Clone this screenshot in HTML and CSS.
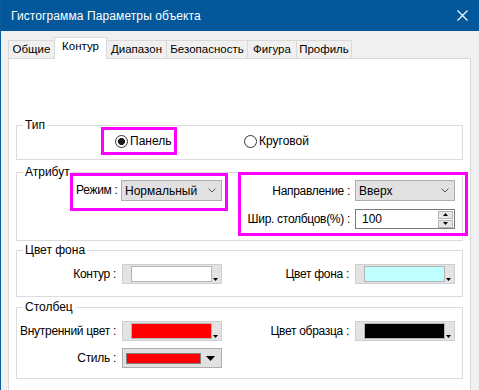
FILE: index.html
```html
<!DOCTYPE html>
<html lang="ru">
<head>
  <meta charset="UTF-8">
  <meta name="viewport" content="width=device-width, initial-scale=1.0">
  <title>Гистограмма Параметры объекта</title>
  <link rel="stylesheet" href="styles.css">
</head>

<body>
  <div class="window">
    <div class="titlebar">
      <span class="title">Гистограмма Параметры объекта</span>
      <span class="close">
        <svg width="11" height="11" viewBox="0 0 11 11"><path d="M0.5 0.5L10.5 10.5M10.5 0.5L0.5 10.5" stroke="#fff" stroke-width="1.1"/></svg>
      </span>
    </div>

    <div class="client">
      <div class="tabs">
        <div class="tab tab-general">Общие</div>
        <div class="tab tab-contour active">Контур</div>
        <div class="tab tab-range">Диапазон</div>
        <div class="tab tab-safety">Безопасность</div>
        <div class="tab tab-shape">Фигура</div>
        <div class="tab tab-profile">Профиль</div>
      </div>

      <div class="panel">
        <fieldset class="group g-type">
          <legend>Тип</legend>
          <div class="type-row">
            <label class="radio mark mark-panel"><span class="dot checked"></span>Панель</label>
            <label class="radio radio-round"><span class="dot"></span>Круговой</label>
          </div>
        </fieldset>

        <fieldset class="group g-attr">
          <legend>Атрибут</legend>
          <div class="attr-row">
            <div class="mark box-mode">
              <span class="lbl">Режим :</span>
              <div class="combo">
                <span>Нормальный</span>
                <svg width="8" height="5" viewBox="0 0 8 5"><path d="M0.5 0.5L4 4L7.5 0.5" fill="none" stroke="#555" stroke-width="1"/></svg>
              </div>
            </div>
            <div class="mark box-dir">
              <span class="lbl">Направление :</span>
              <div class="combo">
                <span>Вверх</span>
                <svg width="8" height="5" viewBox="0 0 8 5"><path d="M0.5 0.5L4 4L7.5 0.5" fill="none" stroke="#555" stroke-width="1"/></svg>
              </div>
              <span class="lbl">Шир. столбцов(%) :</span>
              <div class="spin">
                <span>100</span>
                <div class="spin-btns">
                  <div class="spin-btn"><svg width="5" height="3" viewBox="0 0 5 3"><path d="M0 3L2.5 0L5 3Z" fill="#000"/></svg></div>
                  <div class="spin-btn"><svg width="5" height="3" viewBox="0 0 5 3"><path d="M0 0L2.5 3L5 0Z" fill="#000"/></svg></div>
                </div>
              </div>
            </div>
          </div>
        </fieldset>

        <fieldset class="group g-bg">
          <legend>Цвет фона</legend>
          <div class="color-row">
            <span class="lbl">Контур :</span>
            <div class="ccombo">
              <span class="swatch sw-white"></span>
              <svg class="mini" width="5" height="3" viewBox="0 0 5 3"><path d="M0 0L2.5 3L5 0Z" fill="#000"/></svg>
            </div>
            <span class="lbl">Цвет фона :</span>
            <div class="ccombo">
              <span class="swatch sw-cyan"></span>
              <svg class="mini" width="5" height="3" viewBox="0 0 5 3"><path d="M0 0L2.5 3L5 0Z" fill="#000"/></svg>
            </div>
          </div>
        </fieldset>

        <fieldset class="group g-col">
          <legend>Столбец</legend>
          <div class="color-row">
            <span class="lbl">Внутренний цвет :</span>
            <div class="ccombo">
              <span class="swatch sw-red"></span>
              <svg class="mini" width="5" height="3" viewBox="0 0 5 3"><path d="M0 0L2.5 3L5 0Z" fill="#000"/></svg>
            </div>
            <span class="lbl">Цвет образца :</span>
            <div class="ccombo">
              <span class="swatch sw-black"></span>
              <svg class="mini" width="5" height="3" viewBox="0 0 5 3"><path d="M0 0L2.5 3L5 0Z" fill="#000"/></svg>
            </div>
          </div>
          <div class="color-row">
            <span class="lbl">Стиль :</span>
            <div class="scombo">
              <span class="line-swatch"></span>
              <svg width="9" height="5" viewBox="0 0 9 5"><path d="M0 0L4.5 5L9 0Z" fill="#000"/></svg>
            </div>
          </div>
        </fieldset>
      </div>
    </div>
  </div>
</body>
</html>
```

FILE: styles.css
```css
* {
  box-sizing: border-box;
}

body {
  margin: 0;
  overflow: hidden;
  font-family: "Liberation Sans", Arial, sans-serif;
  font-size: 12px;
  color: #000;
  background: #f0f0f0;
  white-space: nowrap;
}

.window {
  width: 479px;
  height: 390px;
  overflow: hidden;
  border-left: 1px solid #0b5a9c;
  background: #f0f0f0;
}

/* заголовок окна */
.titlebar {
  height: 31px;
  background: #03589c;
  color: #fff;
  display: flex;
  align-items: center;
  padding-left: 10px;
}

.title {
  flex: 1;
  font-size: 12px;
  letter-spacing: 0.1px;
}

.close {
  width: 11px;
  height: 11px;
  margin-right: 11px;
  display: flex;
}

.client {
  padding-left: 7px;
}

/* вкладки */
.tabs {
  display: flex;
  align-items: flex-end;
  height: 21px;
  margin-top: 6px;
  position: relative;
  z-index: 1;
}

.tab {
  height: 18px;
  border: 1px solid #d9d9d9;
  border-right: none;
  border-bottom: none;
  display: flex;
  align-items: center;
  justify-content: center;
  background: #f0f0f0;
  line-height: 1;
  font-size: 11.5px;
}

.tab.active {
  height: 22px;
  margin-bottom: -1px;
  border-right: 1px solid #d9d9d9;
  background: #fff;
  padding-bottom: 3px;
}

.tab-general { width: 46px; }
.tab-contour { width: 53px; }
.tab-range { width: 59px; border-left: none; }
.tab-safety { width: 81px; }
.tab-shape { width: 49px; }
.tab-profile { width: 56px; border-right: 1px solid #d9d9d9; }

.panel {
  width: 463px;
  height: 340px;
  background: #fff;
  border: 1px solid #d9d9d9;
  padding: 59px 7px 0 7px;
}

/* группы */
.group {
  margin: 0;
  padding: 0;
  min-width: 0;
  border: 1px solid #dcdcdc;
}

.group legend {
  margin-left: 6px;
  padding: 0 2px;
  font-size: 12px;
  line-height: 14px;
}

.lbl {
  letter-spacing: -0.3px;
}

.mark {
  border: 3px solid #ff00ff;
}

.g-type {
  padding-bottom: 4px;
}

.type-row {
  display: flex;
  align-items: center;
  height: 28px;
  margin-top: -5px;
  padding-left: 84px;
}

.radio {
  display: flex;
  align-items: center;
}

.mark-panel {
  width: 76px;
  height: 28px;
  padding-left: 11px;
}

.radio-round {
  margin-left: 67px;
}

.dot {
  width: 13px;
  height: 13px;
  margin-right: 2px;
  border: 1px solid #333;
  border-radius: 50%;
  background: #fff;
}

.dot.checked {
  background: radial-gradient(circle, #1a1a1a 3.2px, #fff 3.8px);
}

.g-attr {
  margin-top: 5px;
  padding-bottom: 4px;
}

.attr-row {
  display: flex;
  align-items: flex-start;
}

.box-mode {
  width: 158px;
  height: 38px;
  margin: -6px 0 0 53px;
  padding: 4px 0 0 0;
  display: flex;
  align-items: flex-start;
}

.box-mode .lbl {
  width: 48px;
  padding-left: 3px;
  line-height: 21px;
}

.combo {
  width: 101px;
  height: 21px;
  background: #e1e1e1;
  border: 1px solid #adadad;
  display: flex;
  align-items: center;
  justify-content: space-between;
  padding: 0 5px 0 3px;
}

.box-dir {
  width: 230px;
  height: 64px;
  margin: -7px -6px 0 10px;
  padding-top: 5px;
  display: grid;
  grid-template-columns: 114px 100px;
  grid-template-rows: 21px 20px;
  row-gap: 8px;
  align-content: start;
}

.box-dir .lbl {
  text-align: right;
  padding-right: 5px;
  align-self: center;
}

.box-dir .combo {
  width: 100px;
}

.spin {
  height: 20px;
  background: #fff;
  border: 1px solid #7a7a7a;
  display: flex;
  align-items: center;
  justify-content: space-between;
  padding-left: 6px;
}

.spin-btns {
  display: flex;
  flex-direction: column;
  gap: 1px;
  margin-right: 1px;
}

.spin-btn {
  width: 15px;
  height: 8px;
  background: #e6e6e6;
  border: 1px solid #b4b4b4;
  display: flex;
  align-items: center;
  justify-content: center;
}

/* цвета */
.g-bg {
  margin-top: 2px;
  padding: 7px 0 12px;
}

.g-col {
  margin-top: 3px;
  padding: 7px 0 10px;
  display: flex;
  flex-direction: column;
  gap: 7px;
}

.color-row {
  display: grid;
  grid-template-columns: 105px 100px 133px 100px;
  align-items: center;
  height: 20px;
}

.color-row .lbl {
  text-align: right;
  padding-right: 6px;
}

.ccombo {
  width: 100px;
  height: 20px;
  background: #e3e3e3;
  border: 1px solid #cfcfcf;
  display: flex;
  padding: 1px 0 0 8px;
}

.swatch {
  width: 81px;
  height: 16px;
  border: 1px solid #b4b4b4;
}

.sw-white { background: #fff; }
.sw-cyan { background: #c0ffff; }
.sw-red { background: #ff0000; }
.sw-black { background: #000; }

.mini {
  align-self: flex-end;
  margin: 0 0 2px 1px;
}

.scombo {
  width: 100px;
  height: 20px;
  background: #e1e1e1;
  border: 1px solid #adadad;
  display: flex;
  align-items: center;
  padding-left: 3px;
}

.line-swatch {
  width: 75px;
  height: 11px;
  background: #ff0000;
  border: 1px solid #808080;
  margin-right: 5px;
}
```
